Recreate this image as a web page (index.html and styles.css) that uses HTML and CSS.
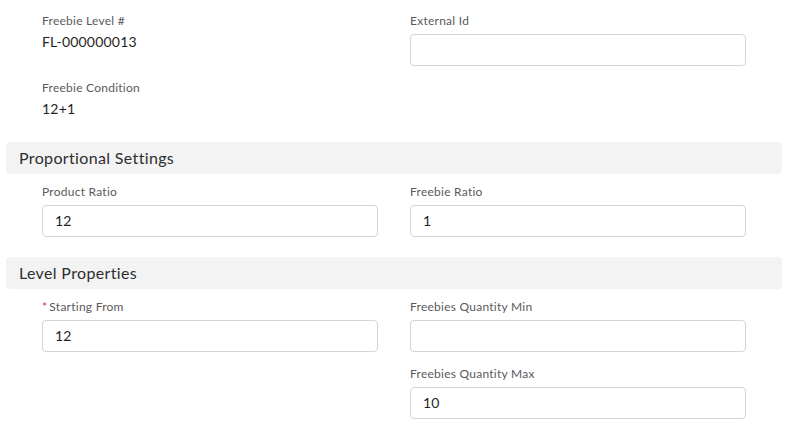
FILE: index.html
```html
<!DOCTYPE html>
<html>
<head>
<meta charset="utf-8">
<link rel="stylesheet" href="styles.css">
</head>
<body>
<div class="page">
  <div class="section first">
    <div class="grid">
      <div class="field">
        <div class="label">Freebie Level #</div>
        <div class="value">FL-000000013</div>
      </div>
      <div class="field">
        <div class="label">External Id</div>
        <div class="input"></div>
      </div>
      <div class="field">
        <div class="label">Freebie Condition</div>
        <div class="value">12+1</div>
      </div>
      <div class="field"></div>
    </div>
  </div>

  <div class="header">Proportional Settings</div>
  <div class="section">
    <div class="grid">
      <div class="field">
        <div class="label">Product Ratio</div>
        <div class="input">12</div>
      </div>
      <div class="field">
        <div class="label">Freebie Ratio</div>
        <div class="input">1</div>
      </div>
    </div>
  </div>

  <div class="header">Level Properties</div>
  <div class="section">
    <div class="grid">
      <div class="field">
        <div class="label"><span class="req">*</span>Starting From</div>
        <div class="input">12</div>
      </div>
      <div class="field">
        <div class="label">Freebies Quantity Min</div>
        <div class="input"></div>
      </div>
      <div class="field"></div>
      <div class="field">
        <div class="label">Freebies Quantity Max</div>
        <div class="input">10</div>
      </div>
    </div>
  </div>
</div>
</body>
</html>
```

FILE: styles.css
```css
* { box-sizing: border-box; }
html, body { margin: 0; padding: 0; background: #ffffff; }
body {
  font-family: Lato, "Open Sans", sans-serif;
  color: #1f1f1f;
}
.page {
  padding: 0 8px 0 6px;
}
.section {
  padding: 9px 36px 20px 36px;
}
.section.first {
  padding-top: 12px;
}
.grid {
  display: grid;
  grid-template-columns: 336px 336px;
  column-gap: 32px;
  row-gap: 13px;
}
.label {
  font-size: 12px;
  line-height: 18px;
  color: #5a5a5a;
  letter-spacing: 0.25px;
  margin-bottom: 4px;
}
.value {
  font-size: 14px;
  line-height: 21px;
  margin-top: -3px;
  padding-bottom: 3px;
  color: #1f1f1f;
  letter-spacing: 0.2px;
}
.input {
  height: 32px;
  border: 1px solid #d4d4d4;
  border-radius: 4px;
  padding: 0 12px;
  font-size: 14px;
  line-height: 30px;
  color: #1f1f1f;
  letter-spacing: 0.2px;
  background: #fff;
}
.header {
  height: 32px;
  line-height: 32px;
  background: #f3f3f3;
  border-radius: 4px;
  padding-left: 13px;
  font-size: 16px;
  letter-spacing: 0.35px;
  color: #2e2e2e;
}
.req {
  color: #c23934;
  margin-right: 2px;
}
```
